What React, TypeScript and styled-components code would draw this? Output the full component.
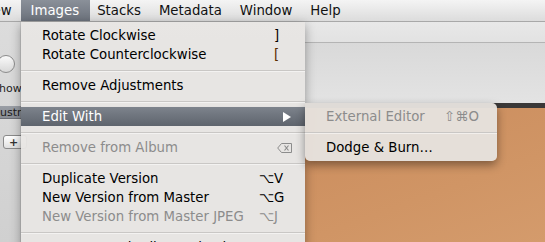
import styled, { createGlobalStyle } from "styled-components";

const GlobalStyle = createGlobalStyle`
  html, body {
    margin: 0;
    padding: 0;
    overflow: hidden;
  }
  body {
    font-family: "DejaVu Sans", "Liberation Sans", sans-serif;
  }
`;

const Screen = styled.div`
  position: relative;
  width: 545px;
  height: 242px;
  overflow: hidden;
  display: flex;
  flex-direction: column;
  background: #d6d6d6;
`;

const MenuBar = styled.div`
  height: 22px;
  flex: none;
  display: flex;
  align-items: stretch;
  margin-left: -29px;
  background: linear-gradient(#f4f4f4, #dcdcdc);
  border-bottom: 1px solid #a8a8a8;
  box-sizing: border-box;
`;

const BarItem = styled.div<{ $active?: boolean }>`
  display: flex;
  align-items: center;
  padding: ${({ $active }) => ($active ? "0 11px 0 10px" : "0 9px")};
  margin-right: ${({ $active }) => ($active ? "-2px" : "0")};
  font-size: 13.3px;
  color: ${({ $active }) => ($active ? "#ffffff" : "#111")};
  background: ${({ $active }) =>
    $active ? "linear-gradient(#8a9099, #6c727c)" : "transparent"};
`;

const Workspace = styled.div`
  flex: 1;
  display: flex;
`;

const BackPane = styled.div`
  width: 305px;
  flex: none;
  display: flex;
  flex-direction: column;
  background: linear-gradient(#dcdcdc, #d0d0d0);
`;

const PaneToolbar = styled.div`
  height: 84px;
  display: flex;
  flex-direction: column;
  align-items: flex-start;
  padding-top: 33px;
  box-sizing: border-box;
`;

const RoundButton = styled.div`
  width: 16px;
  height: 16px;
  margin-left: -3px;
  border-radius: 50%;
  border: 1px solid #8c8c8c;
  background: linear-gradient(#fafafa, #d8d8d8);
`;

const PaneLabel = styled.div`
  margin-top: 9px;
  margin-left: -1px;
  font-size: 11px;
  color: #222;
`;

const TabRow = styled.div`
  height: 12px;
  display: flex;
  align-items: center;
  font-size: 11px;
  color: #1c1c1c;
  background: linear-gradient(#9a9ea5, #8a8e95);
  border-bottom: 1px solid #6d7077;
`;

const PlusButton = styled.div`
  width: 24px;
  height: 14px;
  margin: 16px 0 0 3px;
  border: 1px solid #8a8a8a;
  border-radius: 3px;
  background: linear-gradient(#ffffff, #e0e0e0);
  font-size: 11px;
  font-weight: bold;
  line-height: 13px;
  padding-left: 5px;
  box-sizing: border-box;
  color: #333;
`;

const ViewerPane = styled.div`
  flex: 1;
  display: flex;
  flex-direction: column;
`;

const ToolbarTop = styled.div`
  height: 20px;
  background: linear-gradient(#e8e8e8, #e2e2e2);
  border-bottom: 1px solid #b4b4b4;
`;

const ToolbarBody = styled.div`
  height: 60px;
  background: linear-gradient(#d9d9d9, #e3e3e3);
`;

const PhotoFrame = styled.div`
  height: 5px;
  background: #3a3838;
`;

const Photo = styled.div`
  flex: 1;
  background: linear-gradient(160deg, #cb8c5d, #d09565 60%, #d49b6c);
`;

const Menu = styled.div`
  position: absolute;
  left: 21px;
  top: 22px;
  width: 284px;
  height: 240px;
  padding-top: 4px;
  box-sizing: border-box;
  background: rgba(232, 230, 228, 0.95);
  box-shadow: 0 3px 10px rgba(0, 0, 0, 0.35), -1px 0 0 rgba(0, 0, 0, 0.08);
`;

const SubMenu = styled.div`
  position: absolute;
  left: 305px;
  top: 103px;
  width: 192px;
  padding: 4px 0 4px;
  box-sizing: border-box;
  border-radius: 0 5px 5px 5px;
  background: rgba(230, 226, 222, 0.96);
  box-shadow: 0 4px 10px rgba(0, 0, 0, 0.4);
`;

const Item = styled.div<{ $active?: boolean; $disabled?: boolean; $pad?: number }>`
  height: 19px;
  display: flex;
  align-items: center;
  padding: 0 ${({ $pad }) => $pad ?? 19}px 0 21px;
  font-size: 13.3px;
  line-height: 19px;
  color: ${({ $active, $disabled }) =>
    $active ? "#ffffff" : $disabled ? "#8c8c8c" : "#000"};
  background: ${({ $active }) =>
    $active ? "linear-gradient(#7d838c, #5e646d)" : "transparent"};
`;

const Label = styled.span`
  flex: 1;
  white-space: nowrap;
`;

const Shortcut = styled.span`
  display: flex;
  white-space: nowrap;
`;

const Mods = styled.span`
  text-align: right;
`;

const Key = styled.span<{ $tint?: string }>`
  width: 12px;
  color: ${({ $tint }) => $tint ?? "inherit"};
`;

const Separator = styled.div`
  height: 12px;
  display: flex;
  align-items: center;

  &::before {
    content: "";
    flex: 1;
    height: 1px;
    background: #c9c7c5;
    box-shadow: 0 1px 0 rgba(255, 255, 255, 0.5);
  }
`;

const Arrow = styled.svg`
  width: 8px;
  height: 10px;
  margin-right: -5px;
`;

const DeleteIcon = styled.svg`
  width: 15px;
  height: 10px;
  margin-right: -6px;
`;

export default function App() {
  return (
    <>
      <GlobalStyle />
      <Screen>
        <MenuBar>
          <BarItem>View</BarItem>
          <BarItem $active>Images</BarItem>
          <BarItem>Stacks</BarItem>
          <BarItem>Metadata</BarItem>
          <BarItem>Window</BarItem>
          <BarItem>Help</BarItem>
        </MenuBar>

        <Workspace>
          <BackPane>
            <PaneToolbar>
              <RoundButton />
              <PaneLabel>how</PaneLabel>
            </PaneToolbar>
            <TabRow>ustm</TabRow>
            <PlusButton>+</PlusButton>
          </BackPane>
          <ViewerPane>
            <ToolbarTop />
            <ToolbarBody />
            <PhotoFrame />
            <Photo />
          </ViewerPane>
        </Workspace>

        <Menu>
          <Item>
            <Label>Rotate Clockwise</Label>
            <Shortcut>
              <Key>]</Key>
            </Shortcut>
          </Item>
          <Item>
            <Label>Rotate Counterclockwise</Label>
            <Shortcut>
              <Key $tint="#5a2a00">[</Key>
            </Shortcut>
          </Item>
          <Separator />
          <Item>
            <Label>Remove Adjustments</Label>
          </Item>
          <Separator />
          <Item $active>
            <Label>Edit With</Label>
            <Arrow viewBox="0 0 8 10">
              <path d="M0 0 L8 5 L0 10 Z" fill="#ffffff" />
            </Arrow>
          </Item>
          <Separator />
          <Item $disabled>
            <Label>Remove from Album</Label>
            <DeleteIcon viewBox="0 0 15 10">
              <path
                d="M4.5 0.5 H14.5 V9.5 H4.5 L0.7 5 Z"
                fill="none"
                stroke="#8c8c8c"
                strokeWidth="1"
              />
              <path d="M7.5 2.5 L11.5 7.5 M11.5 2.5 L7.5 7.5" stroke="#8c8c8c" strokeWidth="1.2" />
            </DeleteIcon>
          </Item>
          <Separator />
          <Item>
            <Label>Duplicate Version</Label>
            <Shortcut>
              <Mods>⌥</Mods>
              <Key>V</Key>
            </Shortcut>
          </Item>
          <Item>
            <Label>New Version from Master</Label>
            <Shortcut>
              <Mods>⌥</Mods>
              <Key>G</Key>
            </Shortcut>
          </Item>
          <Item $disabled>
            <Label>New Version from Master JPEG</Label>
            <Shortcut>
              <Mods>⌥</Mods>
              <Key>J</Key>
            </Shortcut>
          </Item>
          <Separator />
          <Item>
            <Label>Compare and Adjust Selection</Label>
          </Item>
        </Menu>

        <SubMenu>
          <Item $disabled $pad={18}>
            <Label>External Editor</Label>
            <Shortcut>
              <Mods>⇧⌘O</Mods>
            </Shortcut>
          </Item>
          <Separator />
          <Item $pad={18}>
            <Label>Dodge &amp; Burn…</Label>
          </Item>
        </SubMenu>
      </Screen>
    </>
  );
}
